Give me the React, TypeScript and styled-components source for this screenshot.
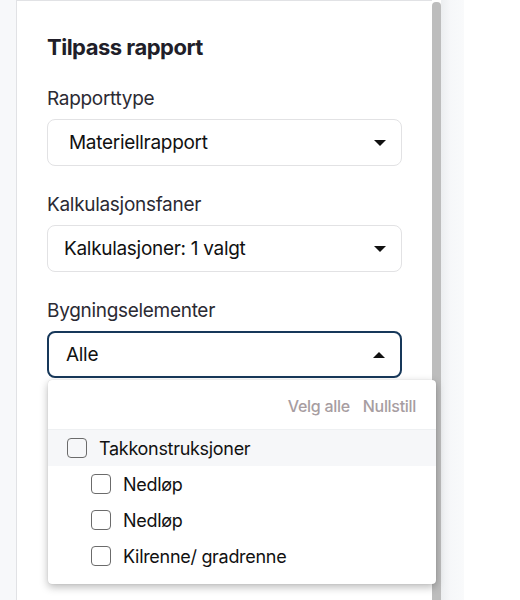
import React from "react";
import styled, { createGlobalStyle } from "styled-components";

const GlobalStyle = createGlobalStyle`
  html, body {
    margin: 0;
    padding: 0;
    background: #ffffff;
    font-family: Inter, "Noto Sans", sans-serif;
    color: #222029;
  }
`;

const Page = styled.div`
  display: flex;
  height: 600px;
  overflow: hidden;
`;

const Gutter = styled.div`
  width: 16px;
  background: #f7f8fa;
`;

const Panel = styled.div`
  position: relative;
  width: 416px;
  background: #fff;
  border-left: 1px solid #e1e2e5;
  border-top: 1px solid #e1e2e5;
  box-sizing: border-box;
  padding: 32px 30px 0 30px;
`;

const Scrollbar = styled.div`
  width: 9px;
  margin-top: 2px;
  background: #bdbdbd;
  border-radius: 4px 4px 0 0;
`;

const Edge = styled.div`
  width: 23px;
  background: linear-gradient(to right, #eceef0, #f6f7f9 40%, #f9fafb);
`;

const Title = styled.h2`
  margin: 0 0 26px;
  font-size: 22px;
  line-height: 28px;
  font-weight: 700;
  letter-spacing: -0.5px;
  color: #211e29;
`;

const Field = styled.div`
  margin-bottom: 27px;
`;

const Label = styled.div`
  font-size: 19px;
  line-height: 24px;
  color: #2b2a33;
  margin-bottom: 8px;
  letter-spacing: -0.3px;
`;

const Select = styled.div<{ $open?: boolean; $inset?: number }>`
  height: 47px;
  box-sizing: border-box;
  display: flex;
  align-items: center;
  justify-content: space-between;
  padding: 0 15px 0 ${(p) => p.$inset ?? 21}px;
  border: ${(p) => (p.$open ? "2px solid #17385a" : "1px solid #e2e2e4")};
  border-radius: 8px;
  font-size: 19px;
  color: #111;
  letter-spacing: -0.3px;
`;

const Caret = styled.span<{ $up?: boolean }>`
  width: 0;
  height: 0;
  border-left: 6px solid transparent;
  border-right: 6px solid transparent;
  ${(p) =>
    p.$up ? "border-bottom: 6px solid #111;" : "border-top: 6px solid #111;"}
`;

const Menu = styled.div`
  position: absolute;
  left: 31px;
  top: 379px;
  width: 388px;
  background: #fff;
  border-radius: 4px;
  box-shadow: 0 3px 8px rgba(0, 0, 0, 0.28), 0 0 1px rgba(0, 0, 0, 0.2);
  padding-bottom: 10px;
  z-index: 2;
`;

const MenuActions = styled.div`
  display: flex;
  justify-content: flex-end;
  gap: 13px;
  padding: 16px 20px 0 0;
  height: 50px;
  box-sizing: border-box;
  border-bottom: 1px solid #eef0f2;
`;

const ActionLink = styled.span`
  font-size: 16px;
  font-weight: 500;
  color: #a79da1;
  letter-spacing: -0.3px;
`;

const Option = styled.div<{ $child?: boolean; $group?: boolean }>`
  display: flex;
  align-items: center;
  gap: 12px;
  height: 36px;
  padding-left: ${(p) => (p.$child ? "43px" : "19px")};
  background: ${(p) => (p.$group ? "#f6f7f9" : "transparent")};
  font-size: 18px;
  color: #111;
  letter-spacing: -0.3px;
`;

const Box = styled.span`
  width: 18px;
  height: 18px;
  border: 1px solid #6b6b6b;
  border-radius: 4px;
  flex-shrink: 0;
`;

const children = ["Nedløp", "Nedløp", "Kilrenne/ gradrenne"];

export default function App() {
  return (
    <>
      <GlobalStyle />
      <Page>
        <Gutter />
        <Panel>
          <Title>Tilpass rapport</Title>
          <Field>
            <Label>Rapporttype</Label>
            <Select>
              Materiellrapport
              <Caret />
            </Select>
          </Field>
          <Field>
            <Label>Kalkulasjonsfaner</Label>
            <Select $inset={16}>
              Kalkulasjoner: 1 valgt
              <Caret />
            </Select>
          </Field>
          <Field>
            <Label>Bygningselementer</Label>
            <Select $open $inset={17}>
              Alle
              <Caret $up />
            </Select>
          </Field>
          <Menu>
            <MenuActions>
              <ActionLink>Velg alle</ActionLink>
              <ActionLink>Nullstill</ActionLink>
            </MenuActions>
            <Option $group>
              <Box />
              Takkonstruksjoner
            </Option>
            {children.map((c, i) => (
              <Option key={i} $child>
                <Box />
                {c}
              </Option>
            ))}
          </Menu>
        </Panel>
        <Scrollbar />
        <Edge />
      </Page>
    </>
  );
}
